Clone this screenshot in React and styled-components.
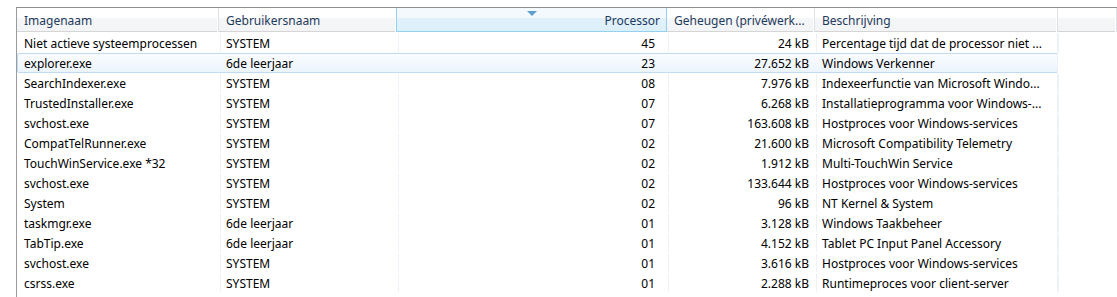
import React from "react";
import styled, { createGlobalStyle, css } from "styled-components";

const GlobalStyle = createGlobalStyle`
  html, body {
    margin: 0;
    background: #ffffff;
  }
  body {
    font-family: "Noto Sans", "Open Sans", sans-serif;
    font-size: 12px;
    color: #000000;
  }
`;

const COLS = "202px 178px 270px 148px 243px 1fr";

const columns = [
  { key: "name", label: "Imagenaam" },
  { key: "user", label: "Gebruikersnaam" },
  { key: "cpu", label: "Processor", right: true, sorted: true },
  { key: "mem", label: "Geheugen (privéwerk..." },
  { key: "desc", label: "Beschrijving" },
];

const processes = [
  ["Niet actieve systeemprocessen", "SYSTEM", "45", "24 kB", "Percentage tijd dat de processor niet ..."],
  ["explorer.exe", "6de leerjaar", "23", "27.652 kB", "Windows Verkenner"],
  ["SearchIndexer.exe", "SYSTEM", "08", "7.976 kB", "Indexeerfunctie van Microsoft Windo..."],
  ["TrustedInstaller.exe", "SYSTEM", "07", "6.268 kB", "Installatieprogramma voor Windows-..."],
  ["svchost.exe", "SYSTEM", "07", "163.608 kB", "Hostproces voor Windows-services"],
  ["CompatTelRunner.exe", "SYSTEM", "02", "21.600 kB", "Microsoft Compatibility Telemetry"],
  ["TouchWinService.exe *32", "SYSTEM", "02", "1.912 kB", "Multi-TouchWin Service"],
  ["svchost.exe", "SYSTEM", "02", "133.644 kB", "Hostproces voor Windows-services"],
  ["System", "SYSTEM", "02", "96 kB", "NT Kernel & System"],
  ["taskmgr.exe", "6de leerjaar", "01", "3.128 kB", "Windows Taakbeheer"],
  ["TabTip.exe", "6de leerjaar", "01", "4.152 kB", "Tablet PC Input Panel Accessory"],
  ["svchost.exe", "SYSTEM", "01", "3.616 kB", "Hostproces voor Windows-services"],
  ["csrss.exe", "SYSTEM", "01", "2.288 kB", "Runtimeproces voor client-server"],
];

// padding-right per body column (numbers sit a bit left of the header text)
const cellPadRight = [6, 6, 13, 7, 6];
const alignRight = [false, false, true, true, false];

const Page = styled.div`
  padding: 7px 0 0 16px;
`;

const Frame = styled.div`
  border-top: 1px solid #8e8f8f;
  border-left: 1px solid #9a9b9c;
  height: 289px;
  overflow: hidden;
`;

const Header = styled.div`
  display: grid;
  grid-template-columns: ${COLS};
  height: 24px;
  background: linear-gradient(#ffffff 0, #ffffff 10px, #f5f6f7 10px, #f3f4f5 100%);
  border-bottom: 1px solid #d5d5d5;
  box-sizing: border-box;
`;

const HeadCell = styled.div`
  position: relative;
  box-sizing: border-box;
  padding: 2px 7px 0;
  line-height: 22px;
  color: #1e3a5c;
  border-right: 1px solid #dfe2e5;
  box-shadow: inset -1px 0 0 #ffffff;
  white-space: nowrap;
  overflow: hidden;
  text-align: ${(p) => (p.$right ? "right" : "left")};
  ${(p) =>
    p.$sorted &&
    css`
      background: linear-gradient(#f3f9fd 0, #f3f9fd 10px, #e0f1fb 10px, #dcf0fa 100%);
      border-left: 1px solid #96d0f0;
      border-right: 1px solid #96d0f0;
      border-bottom: 1px solid #96d0f0;
      margin-left: -1px;
      box-shadow: none;
      padding-right: 6px;
      height: 24px;
    `}
`;

const SortArrow = styled.span`
  position: absolute;
  top: 3px;
  left: 50%;
  margin-left: -5px;
  width: 0;
  height: 0;
  border-left: 5px solid transparent;
  border-right: 5px solid transparent;
  border-top: 5px solid #5e9fd0;
`;

const Body = styled.div`
  padding-top: 1px;
`;

const Row = styled.div`
  display: grid;
  grid-template-columns: 1041px 1fr;
  height: 20px;
`;

const Line = styled.div`
  display: grid;
  grid-template-columns: 202px 178px 270px 148px 243px;
  box-sizing: border-box;
  border: 1px solid transparent;
  border-radius: 2px;
  ${(p) =>
    p.$selected &&
    css`
      border-color: #c2dbf4;
      background: linear-gradient(#fbfdff, #ebf4fd);
    `}
`;

const Cell = styled.div`
  box-sizing: border-box;
  padding: 1px ${(p) => p.$pad}px 0 6px;
  line-height: 17px;
  white-space: nowrap;
  overflow: hidden;
  text-align: ${(p) => (p.$right ? "right" : "left")};
  border-right: 1px solid ${(p) => (p.$selected ? "transparent" : "#edf2f9")};
  margin-right: -1px;
  &:first-child {
    margin-left: -1px;
    padding-left: 7px;
  }
  &:last-child {
    margin-right: 0;
  }
`;

const Filler = styled.div`
  border-left: 1px solid #edf2f9;
  margin-left: -1px;
`;

export default function App() {
  return (
    <>
      <GlobalStyle />
      <Page>
        <Frame>
          <Header>
            {columns.map((c) => (
              <HeadCell key={c.key} $right={c.right} $sorted={c.sorted}>
                {c.sorted && <SortArrow />}
                {c.label}
              </HeadCell>
            ))}
            <HeadCell />
          </Header>
          <Body>
            {processes.map((p, i) => {
              const selected = i === 1;
              return (
                <Row key={i}>
                  <Line $selected={selected}>
                    {p.map((v, j) => (
                      <Cell
                        key={j}
                        $right={alignRight[j]}
                        $pad={cellPadRight[j]}
                        $selected={selected}
                      >
                        {v}
                      </Cell>
                    ))}
                  </Line>
                  <Filler />
                </Row>
              );
            })}
          </Body>
        </Frame>
      </Page>
    </>
  );
}
